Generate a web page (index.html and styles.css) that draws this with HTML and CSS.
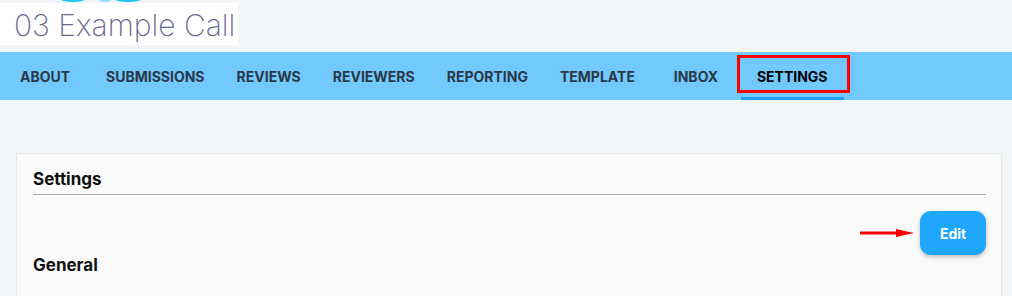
FILE: index.html
```html
<!DOCTYPE html>
<html lang="en">
<head>
    <meta charset="UTF-8">
    <meta name="viewport" content="width=device-width, initial-scale=1.0">
    <title>03 Example Call - Settings</title>
    <link rel="stylesheet" href="styles.css">
</head>
<body>

<!-- Header with call logo -->
<div class="header">
    <div class="logo-blobs">
        <span class="blob blob-a"></span>
        <span class="blob blob-b"></span>
        <span class="blob blob-c"></span>
    </div>
    <div class="logo">03 Example Call</div>
</div>

<!-- Call navigation -->
<nav class="tabs">
    <a class="tab">ABOUT</a>
    <a class="tab">SUBMISSIONS</a>
    <a class="tab">REVIEWS</a>
    <a class="tab">REVIEWERS</a>
    <a class="tab">REPORTING</a>
    <a class="tab">TEMPLATE</a>
    <a class="tab">INBOX</a>
    <a class="tab active">SETTINGS</a>
</nav>

<main class="content">
    <section class="card">
        <h3 class="card-title">Settings</h3>
        <div class="actions">
            <svg class="arrow" width="54" height="10" viewBox="0 0 54 10">
                <line x1="0" y1="5" x2="38" y2="5" stroke="#ff0000" stroke-width="3"/>
                <polygon points="36,1 54,5 36,9" fill="#ff0000"/>
            </svg>
            <button type="button" class="btn-edit">Edit</button>
        </div>
        <h3 class="section-title">General</h3>
    </section>
</main>

</body>
</html>
```

FILE: styles.css
```css
body {
    font-family: Inter, "Noto Sans", sans-serif;
    background-color: #f3f6f9;
    margin: 0;
    color: #111;
}
.header {
    position: relative;
    height: 52px;
    padding-top: 3px;
    box-sizing: border-box;
}
.logo-blobs {
    position: absolute;
    top: 0;
    left: 0;
}
.blob {
    position: absolute;
    top: -5px;
    height: 7px;
    border-radius: 50%;
    background-color: #1fc6f4;
}
.blob-a { left: 60px; width: 26px; }
.blob-b { left: 98px; width: 14px; background-color: #8fdcf4; }
.blob-c { left: 114px; width: 28px; }
.logo {
    display: inline-block;
    background-color: #fff;
    width: 238px;
    height: 42px;
    box-sizing: border-box;
    padding: 2px 0 0 14px;
    font-size: 30px;
    font-weight: 200;
    line-height: 40px;
    color: #6a6c8c;
    white-space: nowrap;
}
.tabs {
    display: flex;
    height: 48px;
    background-color: #71c9fe;
}
.tab {
    position: relative;
    min-width: 90px;
    padding: 0 16px;
    box-sizing: border-box;
    display: flex;
    align-items: center;
    justify-content: center;
    font-size: 14px;
    font-weight: 700;
    color: #2a3847;
    cursor: pointer;
}
.tab.active {
    color: #000;
}
/* blue underline of the current tab */
.tab.active::after {
    content: "";
    position: absolute;
    left: 0;
    right: 0;
    bottom: 0;
    height: 3px;
    background-color: #1da1fb;
}
/* red highlight box around the current tab */
.tab.active::before {
    content: "";
    position: absolute;
    top: 3px;
    left: -4px;
    right: -6px;
    height: 38px;
    box-sizing: border-box;
    border: 3px solid #ff0000;
}
.content {
    padding: 53px 10px 0 16px;
}
.card {
    background-color: #fafafa;
    border: 1px solid #e7e9eb;
    padding: 15px 15px 40px 16px;
}
.card-title {
    margin: 0;
    font-size: 17px;
    line-height: 21px;
    font-weight: 700;
    padding-bottom: 4px;
    border-bottom: 1px solid #a8a8a8;
}
.actions {
    display: flex;
    justify-content: flex-end;
    align-items: center;
    gap: 6px;
    margin-top: 16px;
}
.btn-edit {
    width: 66px;
    height: 44px;
    border: none;
    border-radius: 11px;
    background-color: #1fa6fd;
    color: #fff;
    font-family: Inter, sans-serif;
    font-size: 14px;
    font-weight: 700;
    box-shadow: 0 2px 4px rgba(0, 0, 0, 0.25);
    cursor: pointer;
}
.section-title {
    margin: 0;
    font-size: 17px;
    line-height: 21px;
    font-weight: 700;
}
```
